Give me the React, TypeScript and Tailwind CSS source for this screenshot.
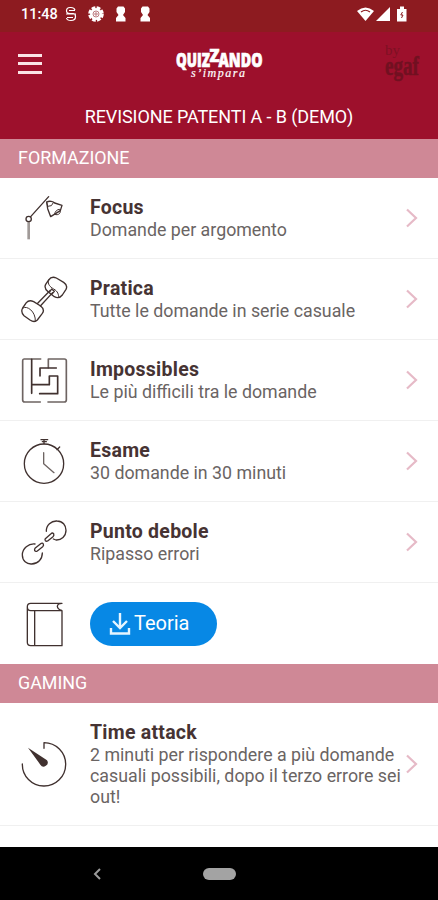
import type { ReactNode } from 'react';

function LineIcon({ viewBox, children }: { viewBox: string; children: ReactNode }) {
  return (
    <svg
      viewBox={viewBox}
      className="h-12 w-12 shrink-0"
      fill="none"
      stroke="#40312f"
      strokeWidth="4"
      strokeLinecap="round"
      strokeLinejoin="round"
    >
      {children}
    </svg>
  );
}

const LampIcon = () => (
  <LineIcon viewBox="60 168 144 144">
    <path d="M86 252V304" stroke="#a09a98" strokeWidth="8" strokeLinecap="butt" />
    <circle cx="86" cy="243" r="8" />
    <path d="M92 236L146 176" />
    <path d="M140 192C148 188 160 190 164 195L186 202L181 218L152 236L143 212Z" />
    <path d="M140 192L143 205L154 203L160 194M164 229C176 234 185 224 179 214C172 214 164 220 164 229" strokeWidth="3" />
  </LineIcon>
);

const DumbbellIcon = () => (
  <LineIcon viewBox="60 45 144 144">
    <path d="M137 73L146 60C152 51 160 50 169 54L191 67C200 73 202 80 198 88L187 105C180 114 172 115 163 110L145 96C136 89 133 81 137 73Z" />
    <path d="M146 60C142 74 150 80 161 87C174 94 176 104 176 112" strokeWidth="3" />
    <path d="M149 96L155 87L163 94L156 102M151 91L113 130M158 98L121 138" />
    <path d="M68 144L79 128C85 121 93 121 101 125L122 138C131 145 132 153 127 160L112 180C105 187 96 184 90 180L72 167C65 160 64 151 68 144Z" />
    <path d="M69 144C80 135 108 154 106 184" strokeWidth="3" />
  </LineIcon>
);

const MazeIcon = () => (
  <LineIcon viewBox="60 288 144 144">
    <path d="M122 297H72Q68 297 68 302V420Q68 426 74 426H121M144 426H193Q199 426 199 420V302Q199 297 193 297H145V323" stroke="#6e6462" strokeWidth="5" />
    <path d="M95 298V400M95 374H148V348H173V401H119M120 348V324H169" strokeWidth="5" />
  </LineIcon>
);

const StopwatchIcon = () => (
  <LineIcon viewBox="60 51 144 144">
    <circle cx="132" cy="131" r="59" />
    <path d="M123 59H143M127 65H139M132 60V71M171 89L179 81" />
    <path d="M131 98V131L162 158" stroke="#6e6462" />
  </LineIcon>
);

const ChainIcon = () => (
  <LineIcon viewBox="60 294 144 144">
    <path d="M139 334C138 315 154 302 171 303C188 303 198 316 198 331C198 349 184 361 168 360L160 357" />
    <path d="M105 372C86 370 67 385 67 405C67 422 80 433 95 432C114 431 127 418 127 399" />
    <path d="M136 356L153 341Q157 337 161 341Q163 346 159 350L143 363Q139 365 136 362Q134 359 136 356ZM105 385L122 371Q127 367 130 372Q132 376 128 380L112 393Q107 396 104 392Q103 388 105 385Z" />
  </LineIcon>
);

const BookIcon = () => (
  <LineIcon viewBox="60 57 144 144">
    <path d="M186 67H92Q82 67 82 77V184Q82 194 92 194H186V89H92Q82 89 82 78M104 89V194M186 67Q173 67 172 76Q173 85 185 88" />
  </LineIcon>
);

const TimerIcon = () => (
  <LineIcon viewBox="60 120 144 144">
    <path d="M132 145V128A65 65 0 1 1 67 192" />
    <path d="M84 143L141 181A11 11 0 1 1 121 194Z" fill="#40312f" stroke="none" />
  </LineIcon>
);

function Chevron() {
  return (
    <svg viewBox="0 0 14 20" className="h-5 w-3.5 shrink-0" fill="none" stroke="#e6bac7" strokeWidth="2.2">
      <path d="M2 1.5L11 10L2 18.5" />
    </svg>
  );
}

function Section({ title, className }: { title: string; className: string }) {
  return (
    <div className={`flex items-center bg-[#cf8896] pl-[18px] text-white ${className}`}>
      <h2 className="-mt-0.5 text-[17.9px] leading-5">{title}</h2>
    </div>
  );
}

function Row({ icon, title, text }: { icon: ReactNode; title: string; text: string }) {
  return (
    <div className="flex h-[81px] items-center border-b border-[#f0f0f0] pr-[19px] pl-5">
      {icon}
      <div className="ml-[22px] flex-1 pt-px">
        <h3 className="text-[19.5px] leading-[23px] font-bold tracking-[0.25px] text-[#463333]">{title}</h3>
        <p className="text-[17.8px] leading-[22px] whitespace-nowrap text-[#6a6463]">{text}</p>
      </div>
      <Chevron />
    </div>
  );
}

function StatusBar() {
  return (
    <div className="flex h-8 items-center bg-[#8d1b20] pr-[30px] pl-[21px] text-white">
      <span className="w-[44px] pb-[3px] text-[14.5px] leading-5 font-medium">11:48</span>
      <svg viewBox="0 0 90 20" className="mb-1 h-5 w-[90px]" fill="none" stroke="white">
        <path d="M10 6Q9 3.5 6 3.5H5Q1.5 3.5 1.5 7Q1.5 9.5 5 9.5H8Q10.5 9.5 10.5 12.500Q10.5 16.5 6 16.5Q2 16.5 1.5 14M1 10H11M4 6.5H10M2 13.5H8" strokeWidth="1.2" />
        <circle cx="31" cy="10" r="6" fill="white" strokeWidth="3.6" strokeDasharray="3.4 1.3" />
        <circle cx="31" cy="10" r="3" stroke="#bd7c80" />
        <path d="M31 8V12M29 10H33" stroke="#bd7c80" />
        <path d="M53 2.5H58.500L60 4.500V8L58 11L60.500 14V17.500H51V14L53.500 11L51.500 8V4.500Z" fill="white" stroke="none" />
        <path d="M77.500 2.5H83L84.500 4.500V8L82.500 11L85 14V17.500H75.500V14L78 11L76 8V4.500Z" fill="white" stroke="none" />
      </svg>
      <svg viewBox="0 0 52 20" className="mb-1 ml-auto h-5 w-[52px] translate-x-px">
        <path d="M0 7Q8.500 0 17 7L8.500 17Z" fill="white" />
        <path d="M4 8Q8.500 4.500 13 8" fill="none" stroke="#8d1b20" strokeWidth="1.2" />
        <path d="M19 17L33 3V17Z" fill="white" />
        <path d="M40 5H43V2.500H47V5H49.500V17.500H40Z" fill="white" />
        <path d="M45.500 8L43.800 11H46L44.500 14" fill="none" stroke="#8d1b20" />
      </svg>
    </div>
  );
}

function Header() {
  return (
    <header className="h-[107px] bg-[#9d102c] text-white">
      <div className="flex h-[63px] items-center pr-[14px] pl-[18px]">
        <div className="flex w-12 flex-col gap-[5.500px]">
          <span className="h-[3px] w-6 bg-[#fbe3e6]" />
          <span className="h-[3px] w-6 bg-[#fbe3e6]" />
          <span className="h-[3px] w-6 bg-[#fbe3e6]" />
        </div>
        <svg viewBox="0 0 90 44" className="ml-[109px] h-11 w-[90px] overflow-visible" fill="white" stroke="white">
          <g fontFamily="Open Sans, sans-serif" fontWeight="800" fontSize="18.5" strokeWidth="0.7">
            <text x="1" y="24.5" textLength="34" lengthAdjust="spacingAndGlyphs">QUIZ</text>
            <text x="34.500" y="20" fontSize="18" textLength="10" lengthAdjust="spacingAndGlyphs">Z</text>
            <text x="43.500" y="24.5" textLength="44" lengthAdjust="spacingAndGlyphs">ANDO</text>
          </g>
          <text x="16" y="35" fontFamily="Liberation Serif, serif" fontStyle="italic" fontSize="12" strokeWidth="0.2" textLength="54" lengthAdjust="spacing">s’impara</text>
        </svg>
        <svg viewBox="0 0 40 44" className="ml-auto h-11 w-10 overflow-visible" fill="#711021" fontFamily="Liberation Serif, serif">
          <text x="1" y="13" fontSize="15" opacity="0.7">by</text>
          <text x="1" y="33" fontSize="27" fontWeight="700" stroke="#711021" strokeWidth="0.5" textLength="34" lengthAdjust="spacingAndGlyphs">egaf</text>
        </svg>
      </div>
      <h1 className="pt-[11px] text-center text-[18px] leading-[22px] tracking-[-0.1px]">REVISIONE PATENTI A - B (DEMO)</h1>
    </header>
  );
}

export default function App() {
  return (
    <div className="flex h-[900px] w-[438px] flex-col overflow-hidden bg-white font-['Roboto',sans-serif]">
      <StatusBar />
      <Header />
      <Section title="FORMAZIONE" className="h-[39px]" />
      <Row icon={<LampIcon />} title="Focus" text="Domande per argomento" />
      <Row icon={<DumbbellIcon />} title="Pratica" text="Tutte le domande in serie casuale" />
      <Row icon={<MazeIcon />} title="Impossibles" text="Le più difficili tra le domande" />
      <Row icon={<StopwatchIcon />} title="Esame" text="30 domande in 30 minuti" />
      <Row icon={<ChainIcon />} title="Punto debole" text="Ripasso errori" />
      <div className="flex h-[81px] items-center pl-5">
        <BookIcon />
        <button className="ml-[22px] flex h-11 w-[127px] items-center rounded-full bg-[#0788e5] pl-[19px] text-white">
          <svg viewBox="0 0 22 22" className="h-[22px] w-[22px]" fill="none" stroke="#e6f5ff" strokeWidth="2.4">
            <path d="M11 0V14M4 8L11 15L18 8M2 15V20.500H20V15" />
          </svg>
          <span className="-mt-0.5 ml-[3px] text-[20px] leading-6">Teoria</span>
        </button>
      </div>
      <Section title="GAMING" className="h-[39px]" />
      <div className="flex h-[123px] items-center border-b border-[#f0f0f0] pr-[19px] pl-5">
        <TimerIcon />
        <div className="ml-[22px] flex-1">
          <h3 className="text-[19.5px] leading-[23px] font-bold tracking-[0.25px] text-[#463333]">Time attack</h3>
          <p className="text-[17.8px] leading-[21px] whitespace-nowrap text-[#6a6463]">
            2 minuti per rispondere a più domande
            <br />
            casuali possibili, dopo il terzo errore sei
            <br />
            out!
          </p>
        </div>
        <Chevron />
      </div>
      <nav className="mt-auto flex h-[53px] items-center bg-black">
        <svg viewBox="0 0 8 12" className="ml-[93px] h-3 w-2" fill="none" stroke="#9b9b9b" strokeWidth="2">
          <path d="M7 1L2 6L7 11" />
        </svg>
        <span className="ml-[102px] h-3 w-[33px] rounded-full bg-[#a3a3a3]" />
      </nav>
    </div>
  );
}
